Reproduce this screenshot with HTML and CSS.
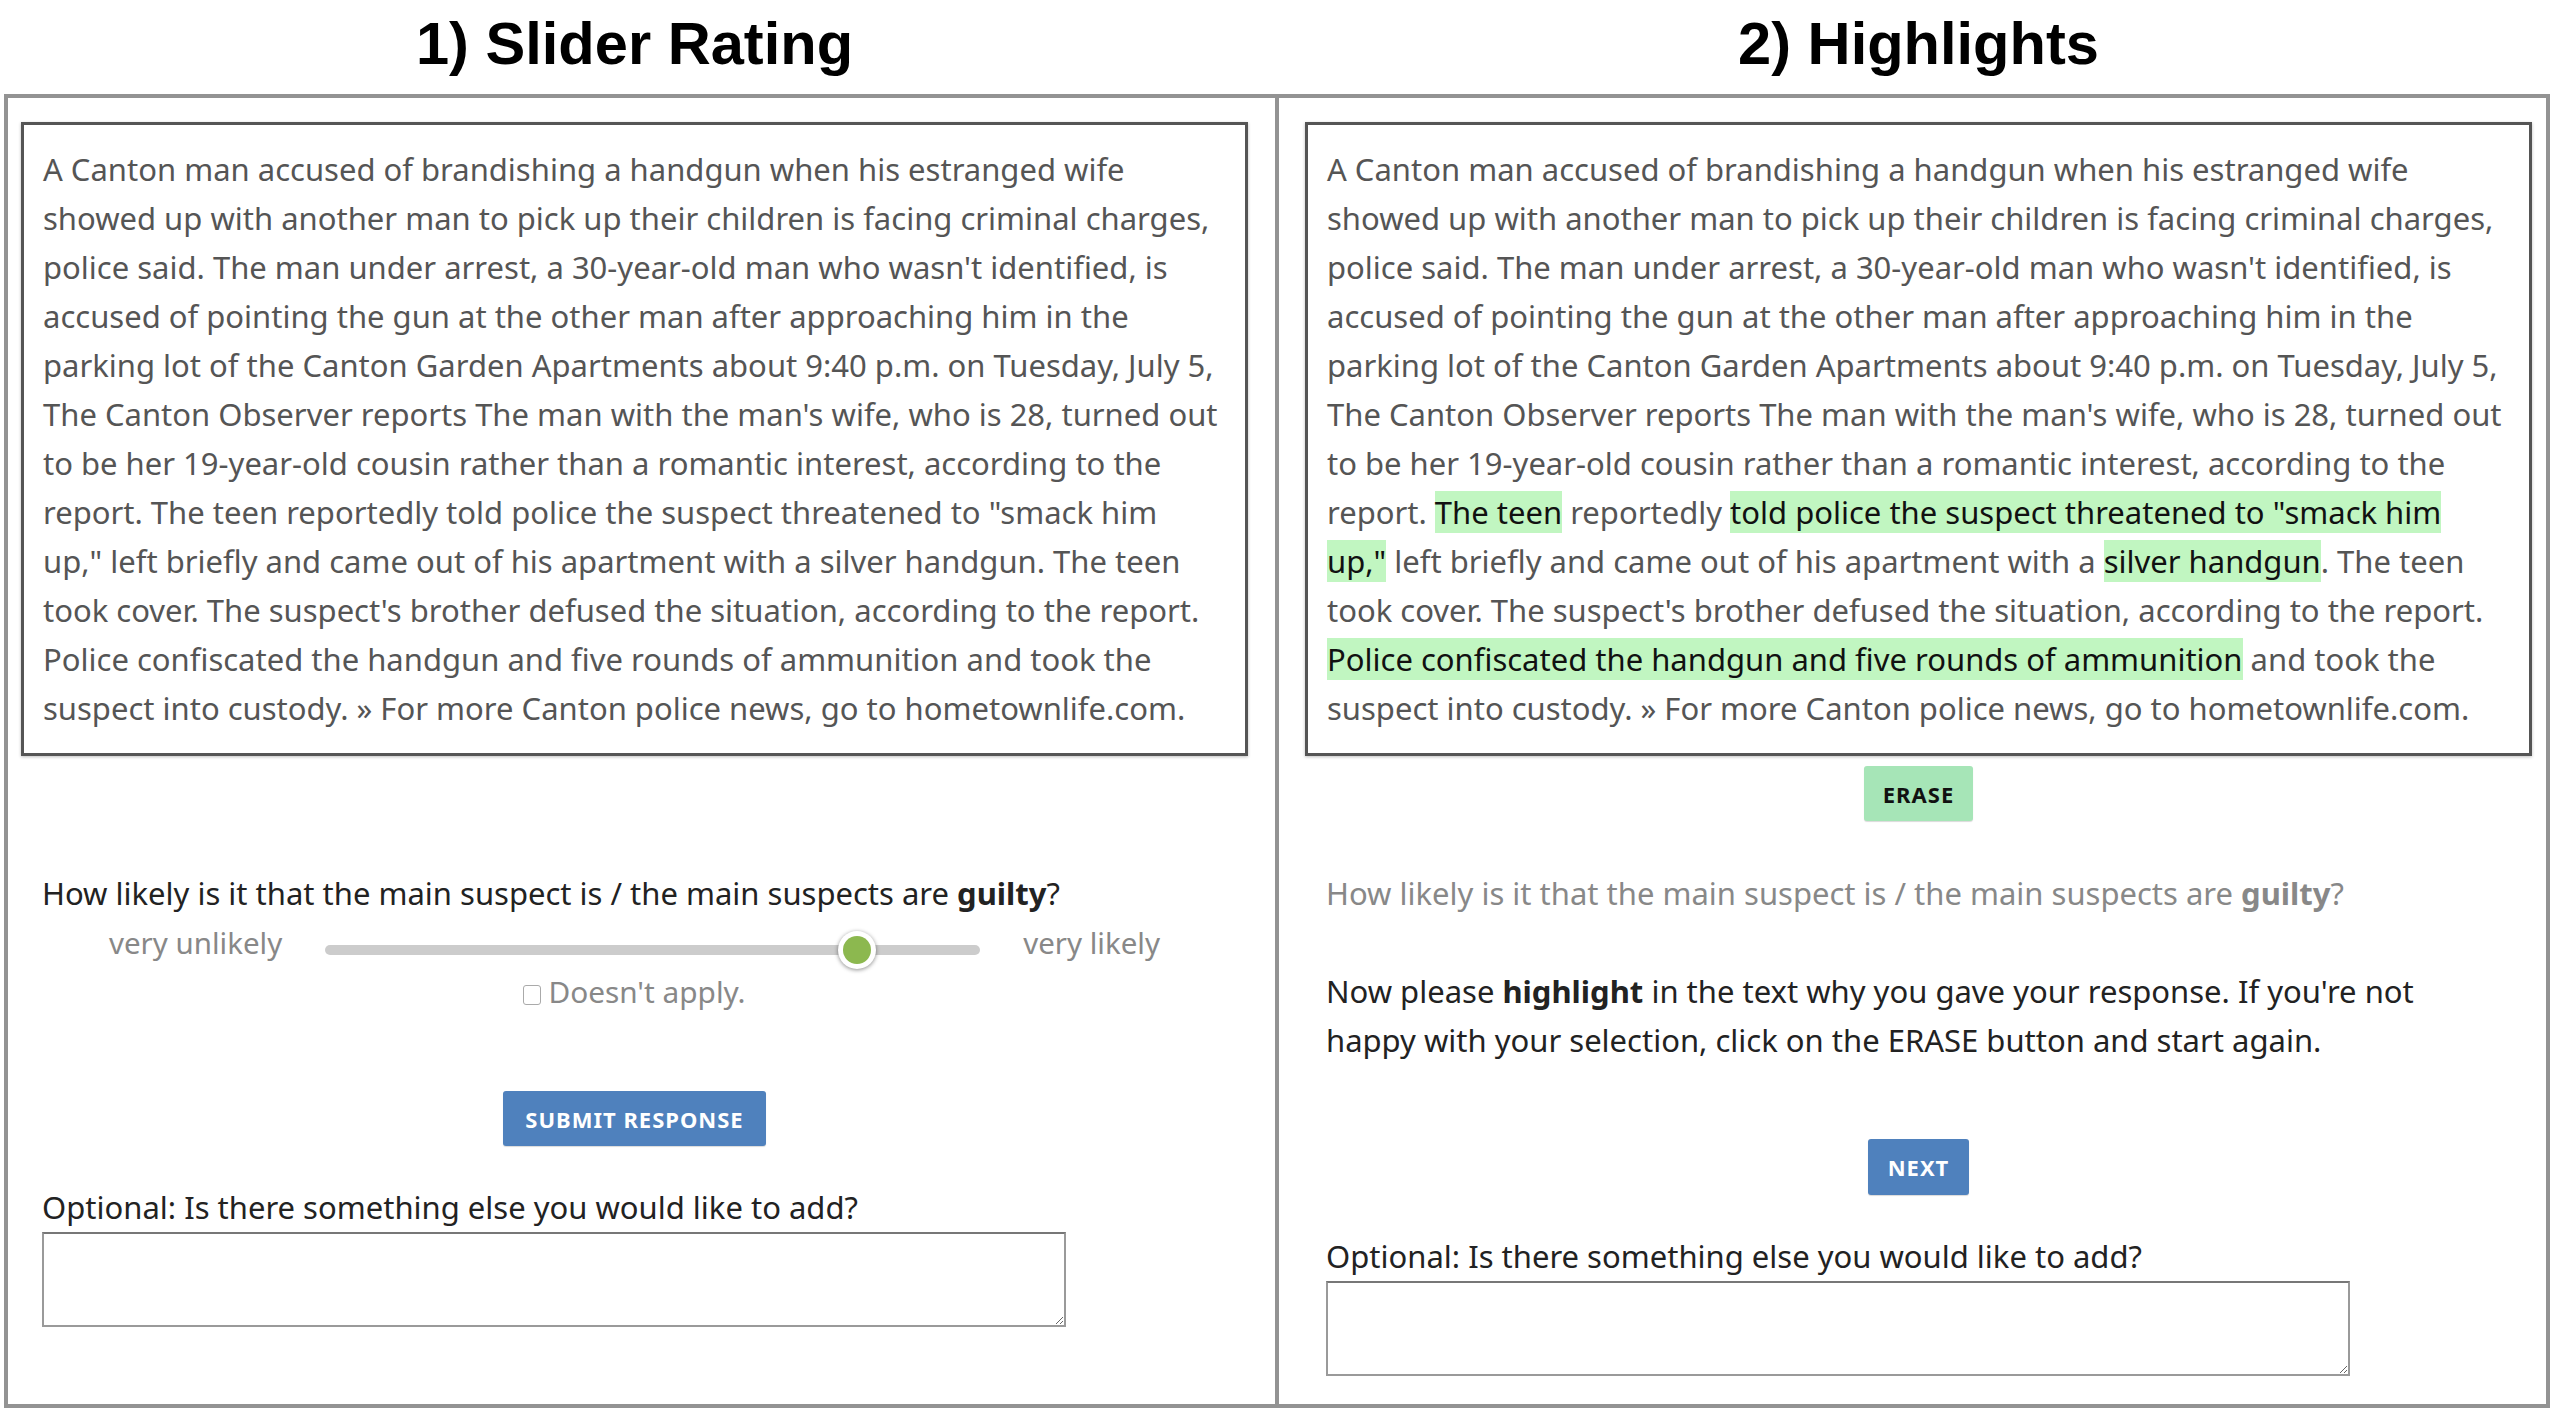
FILE: index.html
```html
<!DOCTYPE html>
<html lang="en">
<head>
<meta charset="utf-8">
<title>Slider Rating vs Highlights</title>
<link rel="stylesheet" href="styles.css">
</head>
<body>
<div class="titles">
  <h1 class="title title-left">1) Slider Rating</h1>
  <h1 class="title title-right">2) Highlights</h1>
</div>
<div class="panels">
  <section class="panel panel-left">
    <div class="column">
      <div class="passage">A Canton man accused of brandishing a handgun when his estranged wife<br>
showed up with another man to pick up their children is facing criminal charges,<br>
police said. The man under arrest, a 30-year-old man who wasn't identified, is<br>
accused of pointing the gun at the other man after approaching him in the<br>
parking lot of the Canton Garden Apartments about 9:40 p.m. on Tuesday, July 5,<br>
The Canton Observer reports The man with the man's wife, who is 28, turned out<br>
to be her 19-year-old cousin rather than a romantic interest, according to the<br>
report. The teen reportedly told police the suspect threatened to "smack him<br>
up," left briefly and came out of his apartment with a silver handgun. The teen<br>
took cover. The suspect's brother defused the situation, according to the report.<br>
Police confiscated the handgun and five rounds of ammunition and took the<br>
suspect into custody. » For more Canton police news, go to hometownlife.com.</div>
      <div class="controls">
        <p class="question question-slider">How likely is it that the main suspect is / the main suspects are <b>guilty</b>?</p>
        <div class="slider-row">
          <span class="slider-label">very unlikely</span>
          <div class="track"><span class="thumb"></span></div>
          <span class="slider-label">very likely</span>
        </div>
        <label class="na"><input class="na-box" type="checkbox">Doesn't apply.</label>
        <div class="btn-row btn-row-submit"><button class="btn btn-blue btn-submit" type="button">Submit Response</button></div>
        <p class="optional">Optional: Is there something else you would like to add?</p>
        <textarea class="comment"></textarea>
      </div>
    </div>
  </section>
  <section class="panel panel-right">
    <div class="column">
      <div class="passage">A Canton man accused of brandishing a handgun when his estranged wife<br>
showed up with another man to pick up their children is facing criminal charges,<br>
police said. The man under arrest, a 30-year-old man who wasn't identified, is<br>
accused of pointing the gun at the other man after approaching him in the<br>
parking lot of the Canton Garden Apartments about 9:40 p.m. on Tuesday, July 5,<br>
The Canton Observer reports The man with the man's wife, who is 28, turned out<br>
to be her 19-year-old cousin rather than a romantic interest, according to the<br>
report. <span class="mark">The teen</span> reportedly <span class="mark">told police the suspect threatened to "smack him</span><br>
<span class="mark">up,"</span> left briefly and came out of his apartment with a <span class="mark">silver handgun</span>. The teen<br>
took cover. The suspect's brother defused the situation, according to the report.<br>
<span class="mark">Police confiscated the handgun and five rounds of ammunition</span> and took the<br>
suspect into custody. » For more Canton police news, go to hometownlife.com.</div>
      <div class="controls">
        <div class="btn-row btn-row-erase"><button class="btn btn-green" type="button">Erase</button></div>
        <p class="question question-muted">How likely is it that the main suspect is / the main suspects are <b>guilty</b>?</p>
        <p class="instructions">Now please <b>highlight</b> in the text why you gave your response. If you're not<br>happy with your selection, click on the ERASE button and start again.</p>
        <div class="btn-row btn-row-next"><button class="btn btn-blue btn-next" type="button">Next</button></div>
        <p class="optional">Optional: Is there something else you would like to add?</p>
        <textarea class="comment"></textarea>
      </div>
    </div>
  </section>
</div>
</body>
</html>
```

FILE: styles.css
```css
html, body {
  margin: 0;
  padding: 0;
  background: #ffffff;
}

body {
  font-family: "Noto Sans", "Open Sans", sans-serif;
  width: 2556px;
}

.titles {
  display: flex;
  height: 94px;
  padding-top: 11px;
  box-sizing: border-box;
}

.title {
  margin: 0;
  width: 1227px;
  text-align: center;
  font-family: "Liberation Sans", Arial, sans-serif;
  font-weight: bold;
  font-size: 59.6px;
  line-height: 66px;
  color: #000;
}

.title-left {
  margin-left: 21px;
}

.title-right {
  margin-left: 57px;
}

.panels {
  display: flex;
  margin-left: 4px;
  width: 2546px;
  box-sizing: border-box;
  border: 4px solid #939393;
}

.panel {
  width: 1267px;
  padding-bottom: 28px;
}

.panel-right {
  border-left: 4px solid #939393;
}

.column {
  width: 1227px;
}

.panel-left .column {
  margin-left: 13px;
}

.panel-right .column {
  margin-left: 26px;
}

.passage {
  margin-top: 24px;
  border: 3px solid #555;
  padding: 20px 8px 20px 19px;
  font-size: 31px;
  line-height: 49px;
  color: #555;
  white-space: nowrap;
  box-shadow: 0 1px 3px rgba(0, 0, 0, 0.25);
}

.mark {
  background: #c1f6c1;
  color: #111;
}

.controls {
  padding: 0 21px;
  font-size: 31px;
  line-height: 49px;
  color: #222;
}

.question,
.instructions,
.optional {
  margin: 0;
}

.question-slider {
  margin-top: 113px;
}

.question-muted {
  margin-top: 48px;
  color: #888;
}

.instructions {
  margin-top: 49px;
}

.slider-row {
  display: flex;
  justify-content: center;
  align-items: center;
  gap: 43px;
  height: 49px;
}

.slider-label {
  font-size: 29.5px;
  color: #888;
}

.track {
  position: relative;
  width: 655px;
  height: 10px;
  border-radius: 5px;
  background: #cccccc;
  margin-top: 14px;
}

.thumb {
  position: absolute;
  left: 532px;
  top: 5px;
  width: 38px;
  height: 38px;
  margin: -19px 0 0 -19px;
  border-radius: 50%;
  background: #fff;
  box-shadow: 0 1px 4px rgba(0, 0, 0, 0.45);
}

.thumb::after {
  content: "";
  position: absolute;
  left: 5px;
  top: 5px;
  width: 28px;
  height: 28px;
  border-radius: 50%;
  background: #8cb84f;
}

.na {
  display: flex;
  justify-content: center;
  align-items: center;
  height: 49px;
  font-size: 29.8px;
  color: #888;
}

.na-box {
  appearance: none;
  -webkit-appearance: none;
  width: 18px;
  height: 20px;
  margin: 6px 7px 0 0;
  border: 1px solid #aaa;
  border-radius: 3px;
  background: #fff;
  box-sizing: border-box;
}

.btn-row {
  display: flex;
  justify-content: center;
}

.btn-row-submit {
  margin-top: 75px;
}

.btn-row-erase {
  margin-top: 10px;
}

.btn-row-next {
  margin-top: 74px;
}

.btn {
  height: 55px;
  padding: 0 17px;
  border: none;
  border-radius: 3px;
  font-family: "Noto Sans", "Open Sans", sans-serif;
  font-weight: bold;
  font-size: 22px;
  letter-spacing: 1px;
  text-transform: uppercase;
  box-shadow: 0 1px 1px rgba(0, 0, 0, 0.15);
}

.btn-blue {
  background: #4f81bd;
  color: #fff;
}

.btn-submit {
  padding: 0 22px;
}

.btn-green {
  background: #a6e5b7;
  color: #111;
  padding: 0 19px;
}

.btn-next {
  padding: 0 20px;
  height: 56px;
}

.optional {
  margin-top: 37px;
}

.comment {
  display: block;
  width: 1024px;
  height: 95px;
  margin: 0;
  box-sizing: border-box;
  border: 2px solid #9a9a9a;
  border-top-color: #777;
  background: #fff;
  font-family: inherit;
}
```
